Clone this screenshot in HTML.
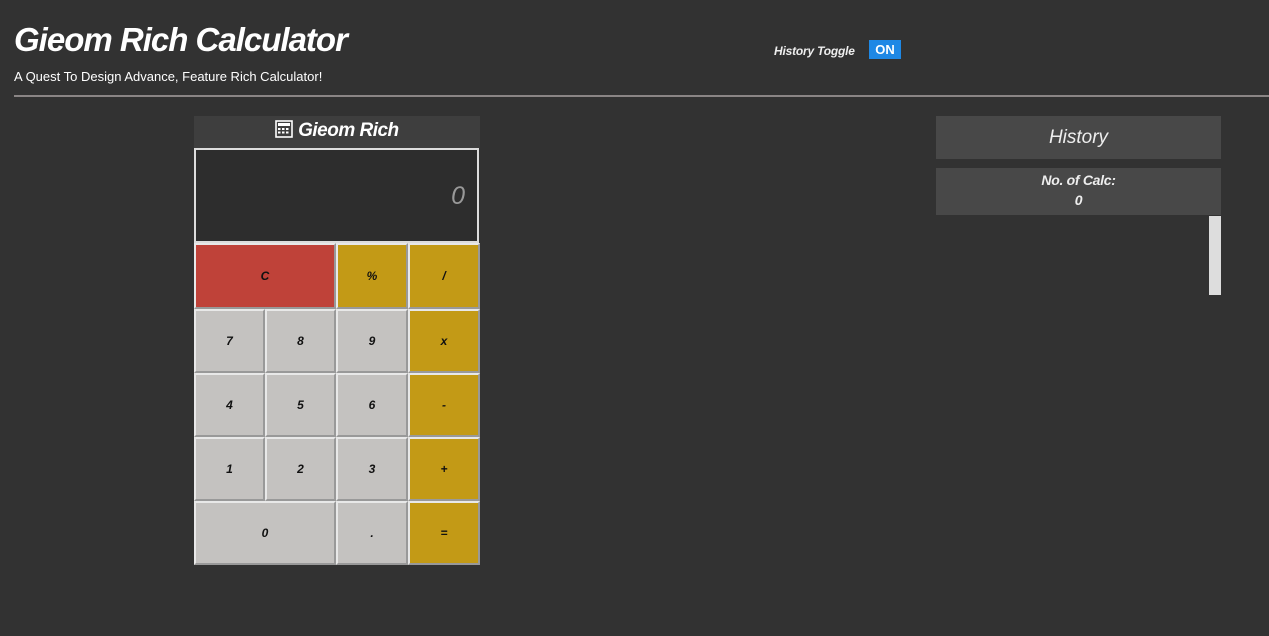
<!DOCTYPE html>
<html><head><meta charset="utf-8"><style>
body{margin:0;width:1269px;height:636px;background:#323232;overflow:hidden;font-family:"Liberation Sans",sans-serif;position:relative;color:#fff}
.a{position:absolute}
h1{position:absolute;left:14px;top:21px;margin:0;font-size:33px;font-style:italic;font-weight:bold;letter-spacing:-1px;color:#fff}
.sub{left:14px;top:69px;font-size:13px;color:#fff}
.hr{left:14px;top:95px;width:1255px;height:2px;background:#8a8585}
.tog{left:774px;top:44px;font-size:12px;font-style:italic;font-weight:bold;color:#eee;letter-spacing:-0.2px}
.on{left:869px;top:40px;width:32px;height:19px;background:#1e88e5;color:#fff;font-size:13px;font-weight:bold;text-align:center;line-height:19px}
.ch{left:194px;top:116px;width:286px;height:32px;background:#3e3e3e;text-align:center;font-size:19px;font-style:italic;font-weight:bold;line-height:30px;letter-spacing:-0.5px}
.disp{left:194px;top:148px;width:281px;height:91px;background:#2d2d2d;border:2px solid #ddd;border-width:2px}
.disp span{position:absolute;right:12px;top:32px;font-size:25px;font-style:italic;color:#999}
.b{position:absolute;box-sizing:border-box;border:2px solid #e8e8e8;border-right-color:#999;border-bottom-color:#999;display:flex;align-items:center;justify-content:center;font-size:12px;font-style:italic;font-weight:bold;color:#111}
.g{background:#c4c2c0}.y{background:#c39a16}.r{background:#bf4239}
.hist{left:936px;top:116px;width:285px;height:43px;background:#484848;text-align:center;font-size:19px;font-style:italic;line-height:43px;color:#eee}
.cnt{left:936px;top:168px;width:285px;height:47px;background:#484848;text-align:center;font-size:14px;font-style:italic;font-weight:bold;line-height:20px;color:#eee;padding-top:2px;box-sizing:border-box;letter-spacing:-0.3px}
.sb{left:1209px;top:216px;width:12px;height:79px;background:#ddd}
</style></head><body>
<h1>Gieom Rich Calculator</h1>
<div class="a sub">A Quest To Design Advance, Feature Rich Calculator!</div>
<div class="a hr"></div>
<div class="a tog">History Toggle</div>
<div class="a on">ON</div>
<div class="a ch"><svg width="18" height="18" viewBox="0 0 18 18" style="vertical-align:-2px"><rect x="1" y="1" width="16" height="16" fill="none" stroke="#fff" stroke-width="1.6"/><rect x="3" y="3" width="12" height="3" fill="#fff"/><g fill="#fff"><rect x="3" y="8" width="2.5" height="2"/><rect x="7" y="8" width="2.5" height="2"/><rect x="11" y="8" width="2.5" height="2"/><rect x="3" y="11.5" width="2.5" height="2"/><rect x="7" y="11.5" width="2.5" height="2"/><rect x="11" y="11.5" width="2.5" height="2"/></g></svg> Gieom Rich</div>
<div class="a disp"><span>0</span></div>
<div class="b r" style="left:194px;top:243px;width:142px;height:66px">C</div>
<div class="b y" style="left:336px;top:243px;width:72px;height:66px">%</div>
<div class="b y" style="left:408px;top:243px;width:72px;height:66px">/</div>
<div class="b g" style="left:194px;top:309px;width:71px;height:64px">7</div>
<div class="b g" style="left:265px;top:309px;width:71px;height:64px">8</div>
<div class="b g" style="left:336px;top:309px;width:72px;height:64px">9</div>
<div class="b y" style="left:408px;top:309px;width:72px;height:64px">x</div>
<div class="b g" style="left:194px;top:373px;width:71px;height:64px">4</div>
<div class="b g" style="left:265px;top:373px;width:71px;height:64px">5</div>
<div class="b g" style="left:336px;top:373px;width:72px;height:64px">6</div>
<div class="b y" style="left:408px;top:373px;width:72px;height:64px">-</div>
<div class="b g" style="left:194px;top:437px;width:71px;height:64px">1</div>
<div class="b g" style="left:265px;top:437px;width:71px;height:64px">2</div>
<div class="b g" style="left:336px;top:437px;width:72px;height:64px">3</div>
<div class="b y" style="left:408px;top:437px;width:72px;height:64px">+</div>
<div class="b g" style="left:194px;top:501px;width:142px;height:64px">0</div>
<div class="b g" style="left:336px;top:501px;width:72px;height:64px">.</div>
<div class="b y" style="left:408px;top:501px;width:72px;height:64px">=</div>
<div class="a hist">History</div>
<div class="a cnt">No. of Calc:<br>0</div>
<div class="a sb"></div>
</body></html>
